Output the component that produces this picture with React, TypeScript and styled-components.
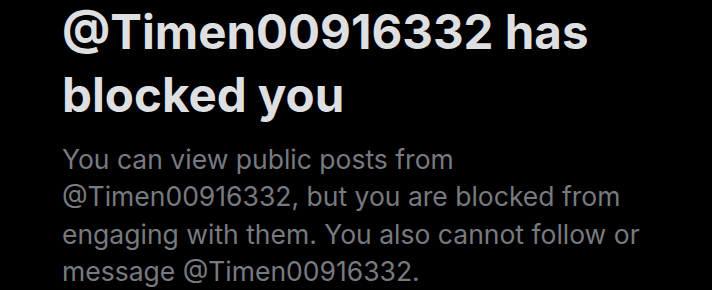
import React from "react";
import styled, { createGlobalStyle } from "styled-components";

const Global = createGlobalStyle`
  html, body { margin: 0; padding: 0; background: #000; }
  body { font-family: Inter, "Noto Sans", sans-serif; }
`;

const Page = styled.main`
  width: 712px;
  height: 290px;
  overflow: hidden;
  background: #000;
  box-sizing: border-box;
  padding: 0 0 0 62px;
  display: flex;
  flex-direction: column;
  gap: 15px;
`;

const Title = styled.h1`
  margin: 0;
  font-size: 47.5px;
  line-height: 63px;
  font-weight: 700;
  color: #dedfe0;
  letter-spacing: 0;
`;

const Body = styled.p`
  margin: 0;
  width: 610px;
  font-size: 26.5px;
  line-height: 37.3px;
  font-weight: 400;
  color: #777a7e;
`;

export default function App() {
  return (
    <>
      <Global />
      <Page>
        <Title>@Timen00916332 has blocked you</Title>
        <Body>
          You can view public posts from @Timen00916332, but you are blocked
          from engaging with them. You also cannot follow or message
          @Timen00916332.
        </Body>
      </Page>
    </>
  );
}
